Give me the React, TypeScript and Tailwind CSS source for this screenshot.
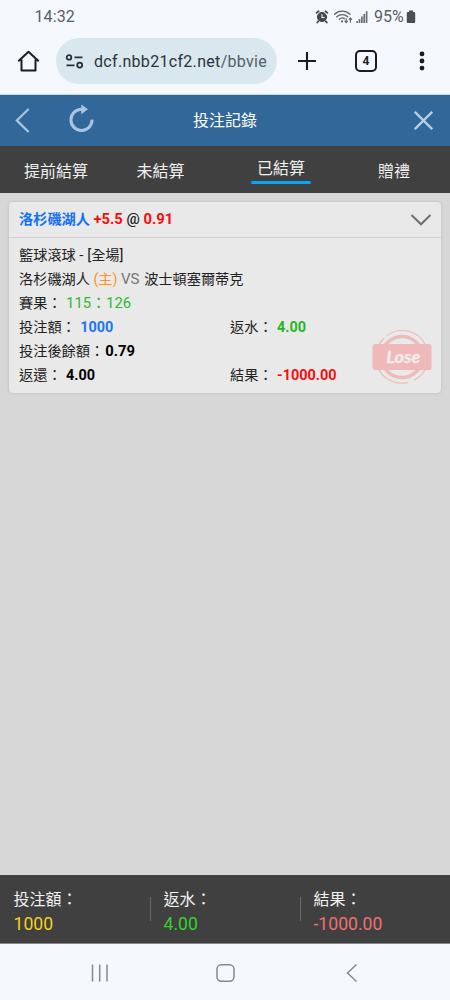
import { FC, ReactNode } from "react";

interface RowProps {
  label: string;
  value: string;
  valueClass: string;
  tight?: boolean;
}

const tabs = [
  { name: "提前結算", width: "w-28" },
  { name: "未結算", width: "w-[97px]" },
  { name: "已結算", width: "w-36", active: true },
  { name: "贈禮", width: "w-[82px]" },
];

const totals = [
  { label: "投注額：", value: "1000", color: "text-[#f0d222]" },
  { label: "返水：", value: "4.00", color: "text-[#2fd52b]" },
  { label: "結果：", value: "-1000.00", color: "text-[#ee7070]" },
];

const Row: FC<RowProps> = ({ label, value, valueClass, tight }) => (
  <div className="flex-1 whitespace-nowrap">
    {label}
    <span className={`${tight ? "ml-px" : "ml-[4.5px]"} ${valueClass}`}>{value}</span>
  </div>
);

const Line = ({ children }: { children: ReactNode }) => (
  <div className="flex h-6 items-center whitespace-nowrap">{children}</div>
);

const StatusIcons = () => (
  <svg width="56" height="16" viewBox="0 0 56 16" fill="none">
    {/* alarm */}
    <g stroke="#45484d" strokeLinecap="round">
      <circle cx="7" cy="8" r="4.6" fill="#45484d" />
      <path d="M1.6 3.9 3.6 2.3M12.4 3.9l-2-1.6M3.2 12.3l-1 1.2M10.8 12.3l1 1.2" strokeWidth="1.8" />
      <path d="M7 5.5v3h2.2" stroke="#f5f8fd" strokeWidth="1.1" />
    </g>
    {/* wifi */}
    <g stroke="#5c6066" strokeWidth="1.3" strokeLinecap="round">
      <path d="M19.5 5.2c4.2-4.2 11.3-4.2 15.5 0M21.8 7.8c3.2-2.9 7.8-2.9 11 0M24.3 10.3c1.8-1.6 3.9-1.6 5-.6" />
      <path d="M31.2 9.6v3.8m-1.3-1.2 1.3 1.4 1.3-1.4M35.4 13.3V9.2m-1.3 1.2 1.3-1.4 1.3 1.4" strokeWidth="1.1" />
    </g>
    <circle cx="27" cy="12.4" r="1.1" fill="#5c6066" />
    {/* signal */}
    <path
      d="M42.2 14v-2M44.5 14v-4M46.9 14V7.5M49.2 14V5M51.6 14V2.2"
      stroke="#6b6e73"
      strokeWidth="1.7"
    />
  </svg>
);

const LoseStamp = () => (
  <svg width="60" height="54" viewBox="0 0 60 54" fill="none">
    <path
      d="M15 5.5A26 26 0 0 1 54 16M12 8.5A26 26 0 0 0 6 16.5M6 38A26 26 0 0 0 36 52.3M42 50.2A26 26 0 0 0 54 38"
      stroke="#efbfbf"
      strokeWidth="1.3"
    />
    <circle cx="30" cy="27" r="20.5" stroke="#efbaba" strokeWidth="3.4" />
    <rect x="0.5" y="14" width="59" height="26" rx="2.5" fill="#efb9b9" />
    <text
      x="31.3"
      y="33"
      textAnchor="middle"
      fontFamily="Lato, sans-serif"
      fontSize="17"
      fontWeight="700"
      fontStyle="italic"
      textLength="34"
      lengthAdjust="spacingAndGlyphs"
      fill="#f5eded"
      stroke="#f5eded"
      strokeWidth="0.3"
    >
      Lose
    </text>
  </svg>
);

const BrowserBar = () => (
  <div className="h-[95px] border-b border-[#c9d9ea] bg-[#f5f8fd]">
    <div className="flex h-[34px] items-center pr-[34px] pl-[34.5px] text-[#5a5e64]">
      <span className="text-base tracking-[0.1px]">14:32</span>
      <div className="ml-auto flex items-center">
        <StatusIcons />
        <span className="ml-[3px] w-8 text-base whitespace-nowrap">95%</span>
        <svg width="10" height="14" viewBox="0 0 10 14" fill="#4b4d51">
          <path d="M3 0.5h4V2h1.2q1 0 1 1v9q0 1-1 1H1.8q-1 0-1-1V3q0-1 1-1H3z" />
        </svg>
      </div>
    </div>
    <div className="flex h-[54px] items-center">
      <svg className="ml-[17px]" width="23" height="24" viewBox="0 0 23 24" fill="none" stroke="#1b1d20" strokeWidth="2">
        <path d="M1.3 12.2 11.5 2.8l10.2 9.4M4.5 10.5v11h14v-11" strokeLinejoin="round" />
      </svg>
      <div className="ml-4 flex h-[46px] w-[221px] items-center rounded-full bg-[#d9e7ef] pl-[9px]">
        <svg width="19" height="15" viewBox="0 0 19 15" fill="none" stroke="#2b3035" strokeWidth="1.8">
          <circle cx="4" cy="3.4" r="2.3" />
          <path d="M9.5 3.4h8M1.5 11.3h8" />
          <circle cx="14.7" cy="11.1" r="2.5" />
        </svg>
        <span className="ml-2.5 pt-0.5 text-base tracking-[0.31px] whitespace-nowrap text-[#2d3338]">
          dcf.nbb21cf2.net<span className="text-[#555e65]">/bbvie</span>
        </span>
      </div>
      <svg className="ml-5" width="20" height="20" viewBox="0 0 20 20" stroke="#1b1d20" strokeWidth="2.1">
        <path d="M1 10h18M10 1v18" />
      </svg>
      <div className="ml-[38px] flex size-[22px] items-center justify-center rounded-[5px] border-2 border-[#1b1d20] text-xs font-bold text-[#1b1d20]">
        4
      </div>
      <svg className="ml-[42px]" width="6" height="20" viewBox="0 0 6 20" fill="#1b1d20">
        <circle cx="3" cy="2.9" r="2.4" />
        <circle cx="3" cy="10" r="2.4" />
        <circle cx="3" cy="17.1" r="2.4" />
      </svg>
    </div>
  </div>
);

const PageHeader = () => (
  <div className="flex h-[51px] items-center bg-[#326799] text-white">
    <div className="flex w-[193px] items-center">
      <svg className="ml-[15px]" width="15" height="26" viewBox="0 0 15 26" fill="none" stroke="#acc5df" strokeWidth="2.2">
        <path d="M13.6 1 1.8 12.4l11.8 11.6" />
      </svg>
      <svg className="mb-[5px] ml-[39px]" width="26" height="28" viewBox="0 0 26 28" fill="none">
        <path d="M23.1 15.6A10.6 10.6 0 1 1 12.5 5.2h2" stroke="#acc5df" strokeWidth="3" />
        <path d="M12.3 0.5 19 5.2l-6.7 5z" fill="#acc5df" />
      </svg>
    </div>
    <h1 className="text-base">投注記錄</h1>
    <div className="flex flex-1 justify-end pr-[17px]">
      <svg className="mb-px" width="19" height="19" viewBox="0 0 19 19" stroke="#b9cde1" strokeWidth="2.3">
        <path d="m.8.8 17.4 17.4M18.2.8.8 18.2" />
      </svg>
    </div>
  </div>
);

const BetCard = () => (
  <div className="relative mx-[9px] mt-[9px] h-[191px] rounded bg-[#e9e9e9] text-[14.2px] text-[#222] shadow-[0_0_3px_rgba(0,0,0,0.15)]">
    <div className="flex h-9 items-center border-b border-[#d2d2d2] pr-[9px] pl-2.5 font-medium">
      <p className="whitespace-nowrap">
        <span className="font-bold text-[#1270f5]">洛杉磯湖人</span>{" "}
        <span className="text-[14.8px]">
          <span className="font-bold text-[#fa0c0c]">+5.5</span> @{" "}
          <span className="font-bold text-[#fa0c0c]">0.91</span>
        </span>
      </p>
      <svg className="ml-auto" width="22" height="14" viewBox="0 0 22 14" fill="none" stroke="#707070" strokeWidth="2">
        <path d="m1.5 2 9.5 9.3L20.5 2" />
      </svg>
    </div>
    <div className="pt-[5.4px] pr-0 pl-2.5">
      <Line>
        <p>
          籃球滾球 <span className="text-[15px]">- [</span>全場
          <span className="text-[15px]">]</span>
        </p>
      </Line>
      <Line>
        <p>
          洛杉磯湖人 <span className="text-[#fa9520]">(主)</span>{" "}
          <span className="text-[15px] text-[#777]">VS </span>
          <span className="ml-px">波士頓塞爾蒂克</span>
        </p>
      </Line>
      <Line>
        <Row label="賽果：" value="115：126" valueClass="text-[14.9px] text-[#2db92d]" />
      </Line>
      <Line>
        <Row label="投注額：" value="1000" valueClass="text-[14.4px] font-bold text-[#1a75f5]" />
        <Row label="返水：" value="4.00" valueClass="text-[14.4px] font-bold text-[#23b81e]" />
      </Line>
      <Line>
        <Row label="投注後餘額：" value="0.79" valueClass="text-[14.8px] font-bold text-black" tight />
      </Line>
      <Line>
        <Row label="返還：" value="4.00" valueClass="text-[14.4px] font-bold text-black" />
        <Row label="結果：" value="-1000.00" valueClass="text-[14.4px] font-bold text-[#fa0c0c]" />
      </Line>
    </div>
    <div className="absolute right-[9px] bottom-[9px]">
      <LoseStamp />
    </div>
  </div>
);

const App: FC = () => {
  return (
    <div className="flex h-[1000px] w-[450px] flex-col overflow-hidden bg-[#d7d7d7] font-['Roboto','Noto_Sans_CJK_TC',sans-serif]">
      <BrowserBar />
      <PageHeader />
      <nav className="flex h-[47px] bg-[#404040] text-base text-[#f0f0f0]">
        {tabs.map((tab) => (
          <div key={tab.name} className={`flex justify-center ${tab.width}`}>
            {tab.active ? (
              <div className="w-[60px] pt-[11px] text-center">
                {tab.name}
                <div className="h-[3px] rounded-full bg-[#09a5f5]" />
              </div>
            ) : (
              <span className="pt-3.5">{tab.name}</span>
            )}
          </div>
        ))}
      </nav>
      <main className="flex-1">
        <BetCard />
      </main>
      <footer className="flex h-[69px] items-center border-b border-[#85878a] bg-[#404040] text-[#f2f2f2]">
        {totals.map((total, i) => (
          <div key={total.label} className="flex w-[150px] items-center">
            <div className={`h-6 w-px ${i > 0 ? "bg-[#6a6a6a]" : ""}`} />
            <div className="ml-[12.5px] pt-1.5 leading-6">
              <div className="text-base leading-6">{total.label}</div>
              <div className={`text-[17.6px] leading-6 ${total.color}`}>{total.value}</div>
            </div>
          </div>
        ))}
      </footer>
      <div className="flex h-14 items-center bg-[#f5f8fd] pt-0.5 pl-[91px]">
        <svg width="270" height="20" viewBox="0 0 270 20" fill="none" stroke="#85888c" strokeWidth="1.5">
          <path d="M1.5 1.5v17M8.7 1.5v17M16 1.5v17" />
          <rect x="126" y="1.8" width="17" height="16.5" rx="4.5" />
          <path d="m265.5 1.5-9 8.5 9 8.5" />
        </svg>
      </div>
    </div>
  );
};

export default App;
